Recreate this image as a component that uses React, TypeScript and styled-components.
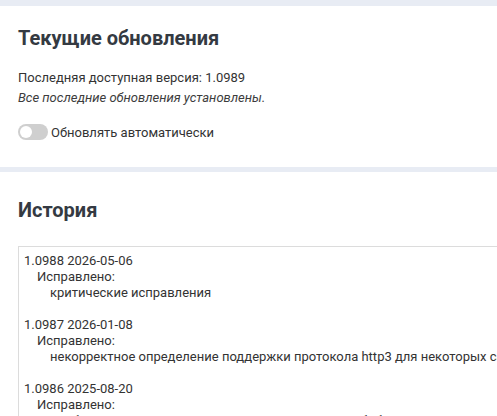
import styled, { createGlobalStyle } from "styled-components";

const GlobalStyle = createGlobalStyle`
  html, body {
    margin: 0;
    padding: 0;
    background-color: #e8ecf4;
    overflow: hidden;
  }
  body {
    font-family: Roboto, "Liberation Sans", Arial, sans-serif;
    color: #333;
  }
`;

const Page = styled.div`
  min-width: 780px;
  display: flex;
  flex-direction: column;
  gap: 5px;
  padding-top: 6px;
`;

const Section = styled.section<{ $top: number; $bottom: number }>`
  background-color: white;
  padding: ${(p) => p.$top}px 18px ${(p) => p.$bottom}px 18px;
`;

const SectionTitle = styled.h2<{ $gap: number }>`
  margin: 0 0 ${(p) => p.$gap}px 0;
  font-size: 20px;
  line-height: 24px;
  font-weight: 700;
  color: #343a42;
`;

const InfoLine = styled.p`
  margin: 0;
  font-size: 13px;
  line-height: 20px;
  color: #333;
`;

const InfoNote = styled(InfoLine)`
  font-style: italic;
  color: #3c3c3c;
`;

const SwitchRow = styled.label`
  display: flex;
  align-items: center;
  gap: 3px;
  margin-top: 16.5px;
  height: 16px;
  font-size: 13px;
  color: #333;
  cursor: pointer;
`;

const SwitchTrack = styled.span<{ $on: boolean }>`
  position: relative;
  width: 30px;
  height: 16px;
  border-radius: 8px;
  background-color: ${(p) => (p.$on ? "#4a90e2" : "#cfcfcf")};
  flex-shrink: 0;
`;

const SwitchKnob = styled.span<{ $on: boolean }>`
  position: absolute;
  top: 2px;
  left: ${(p) => (p.$on ? "16px" : "2px")};
  width: 12px;
  height: 12px;
  border-radius: 50%;
  background-color: white;
`;

const HistoryBox = styled.div`
  border: 1px solid #dcdcdc;
  padding: 6px 5px 6px 5px;
  height: 200px;
  font-size: 13px;
  line-height: 16px;
  color: #333;
  white-space: nowrap;
`;

const Release = styled.div`
  margin-bottom: 16px;
`;

const Heading = styled.div``;

const Group = styled.div`
  padding-left: 13px;
`;

const Item = styled.div`
  padding-left: 13px;
`;

const releases = [
  {
    version: "1.0988 2026-05-06",
    fixed: ["критические исправления"],
  },
  {
    version: "1.0987 2026-01-08",
    fixed: [
      "некорректное определение поддержки протокола http3 для некоторых сайтов",
    ],
  },
  {
    version: "1.0986 2025-08-20",
    fixed: ["проблема с сохранением настроек для сторонней библиотеки"],
  },
];

export default function App() {
  return (
    <>
      <GlobalStyle />
      <Page>
        <Section $top={20} $bottom={27}>
          <SectionTitle $gap={17.5}>Текущие обновления</SectionTitle>
          <InfoLine>Последняя доступная версия: 1.0989</InfoLine>
          <InfoNote>Все последние обновления установлены.</InfoNote>
          <SwitchRow>
            <SwitchTrack $on={false}>
              <SwitchKnob $on={false} />
            </SwitchTrack>
            Обновлять автоматически
          </SwitchRow>
        </Section>
        <Section $top={26} $bottom={20}>
          <SectionTitle $gap={24}>История</SectionTitle>
          <HistoryBox>
            {releases.map((r) => (
              <Release key={r.version}>
                <Heading>{r.version}</Heading>
                <Group>
                  Исправлено:
                  {r.fixed.map((f) => (
                    <Item key={f}>{f}</Item>
                  ))}
                </Group>
              </Release>
            ))}
          </HistoryBox>
        </Section>
      </Page>
    </>
  );
}
